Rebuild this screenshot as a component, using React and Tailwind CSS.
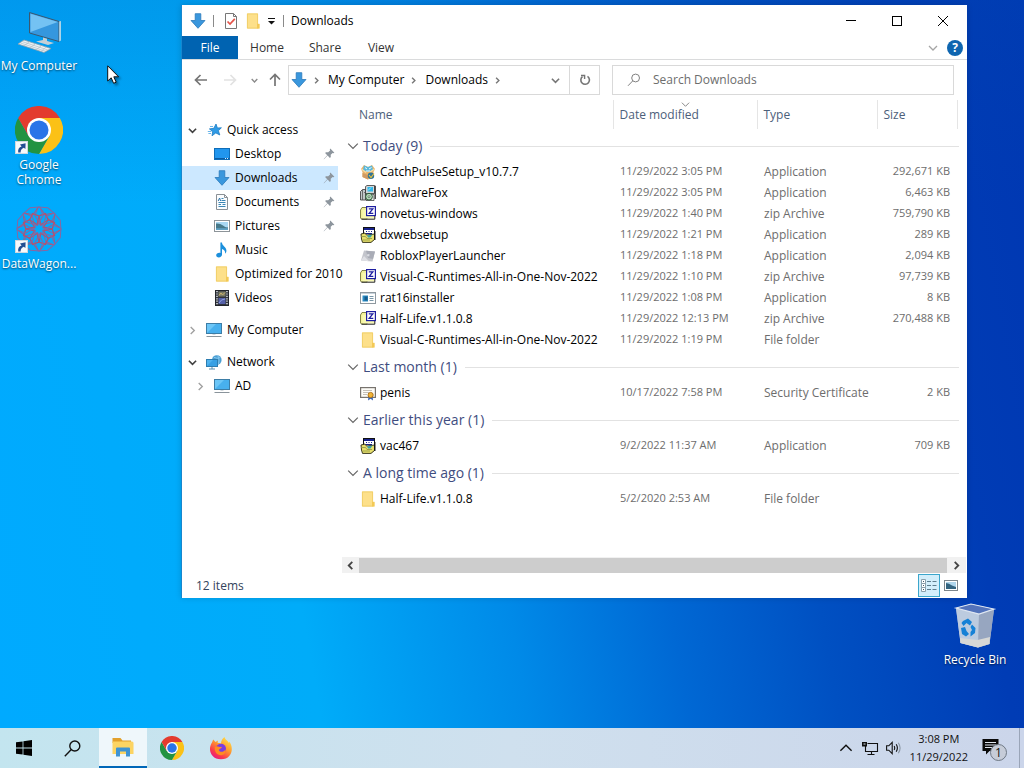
import React from "react";

const FONT = "font-['Open_Sans','Noto_Sans',sans-serif]";

/* ---------- small glyphs ---------- */

function Chevron({ dir = "down", className = "text-[#444]", size = 9, width = 1.5 }) {
  const paths = {
    down: "M1 3 L5 7 L9 3",
    up: "M1 7 L5 3 L9 7",
    right: "M3 1 L7 5 L3 9",
    left: "M7 1 L3 5 L7 9",
  };
  return (
    <svg width={size} height={size} viewBox="0 0 10 10" className={`shrink-0 ${className}`} fill="none" stroke="currentColor" strokeWidth={width}>
      <path d={paths[dir]} />
    </svg>
  );
}

function Arrow({ dir, className }) {
  const paths = {
    left: "M13 7 H1.5 M6.5 2 L1.5 7 L6.5 12",
    right: "M1 7 H12.5 M7.5 2 L12.5 7 L7.5 12",
    up: "M7 13 V1.5 M2 6.5 L7 1.5 L12 6.5",
  };
  return (
    <svg width="14" height="14" viewBox="0 0 14 14" className={className} fill="none" stroke="currentColor" strokeWidth="1.7">
      <path d={paths[dir]} />
    </svg>
  );
}

function Pin() {
  return (
    <svg width="12" height="12" viewBox="0 0 12 12" className="shrink-0" fill="#8d959d">
      <path d="M7.3 0.6 L11.4 4.7 L10.4 5.2 L9.6 4.9 L7.7 6.8 L7.8 9 L6.9 9.9 L4.6 7.6 L1 11.2 L0.7 11.3 L0.8 11 L4.2 7.2 L2.1 5.1 L3 4.2 L5.2 4.3 L7.1 2.4 L6.8 1.6 Z" />
    </svg>
  );
}

function Svg16({ children }) {
  return (
    <svg width="16" height="16" viewBox="0 0 16 16" className="shrink-0">
      {children}
    </svg>
  );
}

/* ---------- 16px icons ---------- */

const DownloadIcon = () => (
  <Svg16>
    <path d="M5.2 0.7 H10.8 V7.5 H15 L8 15.3 L1 7.5 H5.2 Z" fill="#3a97dd" stroke="#2a78ba" strokeWidth="0.8" />
  </Svg16>
);

const FolderIcon = () => (
  <Svg16>
    <path d="M2 0.5 H13 V11 H14.5 V15.5 H2 Z" fill="#fbdf86" />
    <path d="M2.4 0.9 H12.6 V15.1 H2.4 Z" fill="#fde08a" stroke="#efca62" strokeWidth="0.8" />
    <path d="M12 15.5 V10.8 H14.5 V15.5 Z" fill="#f3c956" />
  </Svg16>
);

const StarIcon = () => (
  <Svg16>
    <path d="M9 2 L10.4 6 L14.4 5.8 L11.4 8.7 L12.8 13 L8.8 10.9 L5 13.8 L5.7 9.5 L2.4 6.9 L6.8 6.3 Z" fill="#2f9be6" stroke="#1d7cc4" strokeWidth="0.8" />
    <path d="M0.8 9.5 H4.4 M1.4 11.5 H4 M3 4.5 H6" stroke="#5aaee8" strokeWidth="0.9" />
  </Svg16>
);

const DesktopIcon = () => (
  <Svg16>
    <rect x="0.5" y="2.5" width="15" height="11" fill="#2196ee" stroke="#0f6db8" />
    <path d="M1 12.5 H15" stroke="#0b5ca3" />
    <path d="M11 12.5 H12 M13 12.5 H14" stroke="#d7ecfb" />
  </Svg16>
);

const DocumentIcon = () => (
  <Svg16>
    <path d="M2.5 0.5 H10.5 L13.5 3.5 V15.5 H2.5 Z" fill="#fbfdff" stroke="#8b9196" />
    <path d="M10.5 0.5 V3.5 H13.5" fill="none" stroke="#8b9196" />
    <path d="M7.5 4.5 H9.5 M7.5 6.5 H11.5 M4.5 8.5 H11.5 M4.5 10.5 H7 M8.5 10.5 H11.5 M4.5 12.5 H11.5" stroke="#3c87b5" />
    <path d="M4.2 7 L5.6 4 L6.6 7" fill="none" stroke="#2d74a8" />
  </Svg16>
);

const PicturesIcon = () => (
  <Svg16>
    <rect x="0.5" y="2.5" width="15" height="11" fill="#fff" stroke="#8d9499" />
    <rect x="2" y="4" width="12" height="8" fill="#a9d8f3" />
    <path d="M2 5.5 Q6 5 9 7.5 T14 9.3 V12 H2 Z" fill="#47798a" />
    <path d="M2 10.2 H14 V12 H2 Z" fill="#5fa1c3" />
  </Svg16>
);

const MusicIcon = () => (
  <Svg16>
    <path d="M6.4 0.6 H8 C8 4 12.6 5 12.4 9 C12.3 10.4 11.6 11.3 11 11.8 C11.6 9 9.8 7.6 8 7 V12.6 C8 14.3 6.5 15.5 4.8 15.5 C3.2 15.5 2.2 14.6 2.2 13.3 C2.2 11.7 4 10.4 6.4 10.9 Z" fill="#1b8fdc" />
  </Svg16>
);

const VideoIcon = () => (
  <Svg16>
    <rect x="1.5" y="0.5" width="13" height="15" fill="#30343c" stroke="#22252b" />
    <path d="M3 1 V15 M13 1 V15" stroke="#e8ebee" strokeWidth="1.4" strokeDasharray="1.2 1.2" />
    <rect x="4.5" y="1.5" width="7" height="5" fill="#7b7c66" />
    <path d="M5 5.5 L7 3 L8.5 5 L11 2.5" stroke="#cfb56d" fill="none" />
    <rect x="4.5" y="8" width="7" height="6" fill="#5560a8" />
    <path d="M5 13 Q7 9 11 9" stroke="#8fa1e0" fill="none" />
  </Svg16>
);

const MonitorIcon = () => (
  <Svg16>
    <rect x="0.5" y="1.5" width="15" height="10" fill="#6cc6f7" stroke="#3d7da6" />
    <path d="M1 11 L10 2 H15 V11 Z" fill="#48b0ee" />
    <path d="M6.5 12 H9.5 V13 H6.5 Z" fill="#d4dade" />
    <path d="M0.5 14.5 H15.5" stroke="#8a949b" />
  </Svg16>
);

const NetworkIcon = () => (
  <Svg16>
    <circle cx="10.8" cy="6" r="4.8" fill="#4b9fd4" />
    <path d="M8 3.4 Q11 5 14.4 3.6 M11.8 1.4 Q14 6 12.5 10.4" stroke="#86c8ee" fill="none" />
    <rect x="0.5" y="5.5" width="11" height="7" fill="#4fb3ef" stroke="#2d7db0" />
    <path d="M1 12 L7 6 H11 V12 Z" fill="#37a0e4" />
    <path d="M3 15 H9 M6 13 V15" stroke="#5b8eae" />
  </Svg16>
);

const CatchPulseIcon = () => (
  <Svg16>
    <path d="M1 5 L4 1 L8 3 L12 1 L15 5 L13.5 8 V13 L8 15.5 L2.5 13 V8 Z" fill="#e9b469" />
    <path d="M4 1.5 L8 3 L12 1.5 L13 6 L8 8 L3 6 Z" fill="#58b9dd" />
    <path d="M5 3.5 L7 5 M9 5 L11.5 3.5 M6 7 H10" stroke="#eefaff" />
    <path d="M1.5 5 L6 8.5 M14.5 5 L10 8" stroke="#f5dcab" strokeWidth="1.4" />
    <path d="M2.5 9 L8 11 V15.5 L2.5 13 Z" fill="#d09a62" />
    <circle cx="11" cy="11.8" r="3.2" fill="#2f7497" />
    <path d="M9 11 L11 13.5 L14 9.5" fill="none" stroke="#f0c03a" strokeWidth="1.1" />
  </Svg16>
);

const InstallerIcon = () => (
  <Svg16>
    <path d="M5.5 1.5 L7 0.5 H14.5 V8.5 H5.5 Z" fill="#d3d7d9" stroke="#3a3a3a" strokeWidth="0.8" />
    <rect x="7.5" y="2" width="5.5" height="4.5" fill="#2fb8ea" />
    <path d="M8 5.5 L11 2.5" stroke="#c6f0ff" strokeWidth="0.8" />
    <path d="M15.2 0.8 V14" stroke="#222" strokeWidth="1.2" />
    <path d="M0.5 6.5 L2.5 4.5 H5.5 V15 H0.5 Z" fill="#c2c7c9" stroke="#333" strokeWidth="0.8" />
    <path d="M2.5 5 V15 M4 7.5 H5.5" stroke="#555" strokeWidth="0.8" />
    <path d="M6 8.5 L14 9.5 V15.5 H6 Z" fill="#f4f6f4" stroke="#444" strokeWidth="0.8" />
    <circle cx="9" cy="11.7" r="3.4" fill="#b5d9b9" stroke="#2d5637" strokeWidth="1" />
    <circle cx="9" cy="11.7" r="1" fill="#fff" stroke="#24462f" strokeWidth="0.6" />
  </Svg16>
);

const ZipIcon = () => (
  <Svg16>
    <path d="M0.5 4 L2 1.5 H6 L7 3 V13 H1.5 L0.5 12 Z" fill="#f2f29a" stroke="#77773a" strokeWidth="0.9" />
    <path d="M2.5 4 H14.5 V12.5 H2.5 Z" fill="#f9f9b0" />
    <path d="M1.5 13.2 H14.8 V10" fill="none" stroke="#222" />
    <rect x="6.6" y="0.6" width="8.8" height="9" fill="#fff" stroke="#1e1ea0" strokeWidth="1.2" />
    <path d="M8.8 2.9 H12.8 L9.2 7.3 H13.3" fill="none" stroke="#1e1ea0" strokeWidth="1.3" />
  </Svg16>
);

const SetupBoxIcon = () => (
  <Svg16>
    <rect x="3.5" y="0.5" width="11" height="9" fill="#fff" stroke="#111" />
    <rect x="4" y="1" width="10" height="2" fill="#16218c" />
    <path d="M6 4.5 H7 M8.5 4.5 H9.5 M11 4.5 H12 M6 6.5 H12" stroke="#16218c" />
    <path d="M1 7 L5 6 L6.5 8 L11 7.5 L14.5 7 V12.5 L11 15.4 H2.5 L1.5 12 Z" fill="#e7df6d" stroke="#25250f" strokeWidth="0.9" />
    <path d="M1 9.5 H5.5 L7 11.5 H12 M3 13 H10" fill="none" stroke="#8a9440" strokeWidth="0.8" />
    <path d="M7 8.5 L12.5 7.6 L10.5 10.5 H8 Z" fill="#3aa0a8" />
    <path d="M14.8 4 V13" stroke="#111" strokeWidth="1.3" />
  </Svg16>
);

const RobloxIcon = () => (
  <Svg16>
    <path d="M4 2.5 L15 3.5 L12.5 13.5 L1 12.5 Z" fill="#c3c5cc" />
    <path d="M6 2.7 L15 3.5 L13 11 L8 10 Z" fill="#a9acb6" />
    <path d="M7.5 6 L9.6 6.3 L9.2 8.4 L7 8 Z" fill="#dcdee4" />
    <path d="M1 12.5 L4 8 L9 13.2 Z" fill="#dfe0e5" />
  </Svg16>
);

const WindowAppIcon = () => (
  <Svg16>
    <rect x="0.5" y="2.5" width="15" height="11" fill="#fff" stroke="#8e989f" />
    <path d="M1 3.5 H15" stroke="#c6d2da" />
    <rect x="2.5" y="5.5" width="5.5" height="6" fill="#2a8cc4" />
    <rect x="4.5" y="6.5" width="3" height="4" fill="#155a8a" />
    <path d="M9.5 6.5 H13.5 M9.5 8.5 H13.5 M9.5 10.5 H13.5" stroke="#7896a8" />
  </Svg16>
);

const CertificateIcon = () => (
  <Svg16>
    <rect x="0.6" y="2.6" width="14.8" height="9.8" fill="#fdfcf7" stroke="#77736e" strokeWidth="1.2" />
    <path d="M3 5.5 H12 M3 7.5 H9 M3 9.5 H7" stroke="#c3bfb8" />
    <path d="M8.6 11 L8 15.5 L10.6 13.8 L13 15.5 L12.6 11 Z" fill="#3663b4" />
    <circle cx="10.6" cy="10" r="2.6" fill="#f1b434" stroke="#a96a12" strokeWidth="0.9" />
  </Svg16>
);

const CheckDocIcon = () => (
  <Svg16>
    <path d="M2.5 0.5 H10.5 L13.5 3.5 V15.5 H2.5 Z" fill="#fff" stroke="#777" />
    <path d="M10.5 0.5 V3.5 H13.5" fill="none" stroke="#777" />
    <path d="M4.5 8.5 L7 11 L11.8 5.8" fill="none" stroke="#e5544a" strokeWidth="1.7" />
  </Svg16>
);

/* ---------- larger icons ---------- */

function ChromeLogo({ size }) {
  return (
    <svg width={size} height={size} viewBox="0 0 48 48">
      <path d="M24 12 H44.8 A24 24 0 0 1 24 48 L34.4 30 Z" fill="#fbc116" />
      <path d="M13.6 30 L3.2 12 A24 24 0 0 0 24 48 L34.4 30 Z" fill="#229342" />
      <path d="M3.2 12 L13.6 30 L24 12 H44.8 A24 24 0 0 0 3.2 12 Z" fill="#e33b2e" />
      <circle cx="24" cy="24" r="12" fill="#fff" />
      <circle cx="24" cy="24" r="9.5" fill="#2a74e8" />
    </svg>
  );
}

function ShortcutBadge() {
  return (
    <svg width="13" height="13" viewBox="0 0 13 13" className="absolute bottom-0 left-0">
      <rect x="0.5" y="0.5" width="12" height="12" fill="#f7f9fb" stroke="#cfd8de" />
      <path d="M3.2 11.5 C2.8 8.2 4 6.2 6.6 5.4 L5 3.6 L10.6 2.2 L10.4 8 L8.8 6.8 C6.8 7.6 5.6 9 5.6 11.5 Z" fill="#234f92" />
    </svg>
  );
}

function ComputerArt() {
  return (
    <svg width="48" height="48" viewBox="0 0 48 48">
      <path d="M14.5 5.5 L44 14.5 V34.5 L14.5 26 Z" fill="#3597de" stroke="#3b5870" strokeWidth="1" />
      <path d="M15.5 6.8 L42.8 15 L15.5 25 Z" fill="#74c2f3" />
      <path d="M44.3 14.5 L45.8 14 V33.5 L44.3 34.5 Z" fill="#d7e2e8" />
      <path d="M28 30.5 L32 31.7 V34 L39 36 L33 38 L21 34.5 L28 33 Z" fill="#c5cfd5" />
      <path d="M9 33 L36 41.5 L29 45.5 L3 37 Z" fill="#eef2f4" stroke="#8ba0ad" strokeWidth="0.8" />
      <path d="M7.5 34.7 L33 43 M5.5 36 L31 44.4 M14 35 L9 39 M20 37 L15 41 M26 39 L21 43 M31 40 L26 44.5" stroke="#a7b6bf" strokeWidth="0.6" />
    </svg>
  );
}

const SPOKES = [0, 45, 90, 135, 180, 225, 270, 315];

function DataWagonArt() {
  return (
    <svg width="48" height="48" viewBox="0 0 48 48" fill="none">
      {SPOKES.map((a) => (
        <g key={a} transform={`rotate(${a + 22.5} 24 24)`}>
          <path d="M15 13 V4 L24 1 L33 4 V13 L24 20 Z" stroke="#8a66a0" strokeWidth="1" />
          <path d="M17 4 L30 12 M31 4 L18 12" stroke="#a9587f" strokeWidth="0.9" />
          <path d="M19 12 L24 7 L29 12 L24 19 Z" stroke="#b0526f" strokeWidth="1" />
        </g>
      ))}
    </svg>
  );
}

function RecycleArt() {
  return (
    <svg width="48" height="48" viewBox="0 0 48 48">
      <path d="M5 7 L20 3 L43 8 L38.5 43 L27 46.5 L9.5 42 Z" fill="#aebdd3" />
      <path d="M5 7 L28 13 L27 46.5 L9.5 42 Z" fill="#bccbdf" />
      <path d="M28 13 L43 8 L38.5 43 L27 46.5 Z" fill="#97a6c0" />
      <path d="M5 7 L20 3 L43 8 L28 13 Z" fill="#5373bb" stroke="#dfe7f2" strokeWidth="1.2" />
      <path d="M9 37 L26.5 39 L39 36 L38.5 43 L27 46.5 L9.5 42 Z" fill="#d7d8d6" />
      <path d="M12 20 L17 17.5 L21 21 L19 24.5 L15.5 22 L12.5 25 L10.5 22 Z" fill="#1681d6" />
      <path d="M10 27 L14 26 L15.5 30 L18 33 L15 35.5 L11 33 Z" fill="#1681d6" />
      <path d="M21 23.5 L24.5 27 L24 32 L19.5 35.5 V31 L21 29 L19.5 26 Z" fill="#1681d6" />
    </svg>
  );
}

function ExplorerArt() {
  return (
    <svg width="22" height="20" viewBox="0 0 22 20">
      <path d="M0.5 1 H8.5 L10.5 3.5 H19 V6 H0.5 Z" fill="#e2a02c" />
      <path d="M1 4.5 H20 Q21.5 4.5 21.5 6 V17 H0.5 V5 Z" fill="#fcd463" />
      <path d="M4 19.5 V11.5 Q4 10.5 5 10.5 H17 Q18 10.5 18 11.5 V19.5 H14 V14.5 H8 V19.5 Z" fill="#3f93d2" />
    </svg>
  );
}

function FirefoxArt() {
  return (
    <svg width="24" height="24" viewBox="0 0 24 24">
      <defs>
        <linearGradient id="fx" x1="0.85" y1="0.05" x2="0.2" y2="1">
          <stop offset="0" stopColor="#ffe04a" />
          <stop offset="0.4" stopColor="#ff9a2e" />
          <stop offset="0.75" stopColor="#fb3a4e" />
          <stop offset="1" stopColor="#e31587" />
        </linearGradient>
      </defs>
      <path d="M3 6.5 L4.2 3.5 L6.5 6 L9 4.5 L8.5 6.8 C10 6.8 11 7 12 7.4 C12 5 13.5 2.2 15.5 1 C16 3.5 18.5 4.5 20 7 L20.3 5.5 C25 11.5 23.5 23.3 12 23.3 C1.5 23.3 -1.5 13 3 6.5 Z" fill="url(#fx)" />
      <circle cx="12" cy="12.8" r="5" fill="#7b3ce0" />
      <path d="M6 11 C8.5 9 10.5 12 13 10.8 C12.5 13 10.5 12.5 9.8 14 C10.8 16.6 14.5 16.5 16.5 13.5 C17.2 18.5 12.5 20.3 9.2 18.6 C6.5 17.2 5.3 13.5 6 11 Z" fill="#ff8b22" />
    </svg>
  );
}

/* ---------- data ---------- */

const QUICK = [
  { label: "Desktop", Icon: DesktopIcon, pinned: true },
  { label: "Downloads", Icon: DownloadIcon, pinned: true, active: true },
  { label: "Documents", Icon: DocumentIcon, pinned: true },
  { label: "Pictures", Icon: PicturesIcon, pinned: true },
  { label: "Music", Icon: MusicIcon },
  { label: "Optimized for 2010", Icon: FolderIcon },
  { label: "Videos", Icon: VideoIcon },
];

const GROUPS = [
  {
    title: "Today (9)",
    files: [
      { name: "CatchPulseSetup_v10.7.7", date: "11/29/2022 3:05 PM", type: "Application", size: "292,671 KB", Icon: CatchPulseIcon },
      { name: "MalwareFox", date: "11/29/2022 3:05 PM", type: "Application", size: "6,463 KB", Icon: InstallerIcon },
      { name: "novetus-windows", date: "11/29/2022 1:40 PM", type: "zip Archive", size: "759,790 KB", Icon: ZipIcon },
      { name: "dxwebsetup", date: "11/29/2022 1:21 PM", type: "Application", size: "289 KB", Icon: SetupBoxIcon },
      { name: "RobloxPlayerLauncher", date: "11/29/2022 1:18 PM", type: "Application", size: "2,094 KB", Icon: RobloxIcon },
      { name: "Visual-C-Runtimes-All-in-One-Nov-2022", date: "11/29/2022 1:10 PM", type: "zip Archive", size: "97,739 KB", Icon: ZipIcon },
      { name: "rat16installer", date: "11/29/2022 1:08 PM", type: "Application", size: "8 KB", Icon: WindowAppIcon },
      { name: "Half-Life.v1.1.0.8", date: "11/29/2022 12:13 PM", type: "zip Archive", size: "270,488 KB", Icon: ZipIcon },
      { name: "Visual-C-Runtimes-All-in-One-Nov-2022", date: "11/29/2022 1:19 PM", type: "File folder", size: "", Icon: FolderIcon },
    ],
  },
  {
    title: "Last month (1)",
    files: [{ name: "penis", date: "10/17/2022 7:58 PM", type: "Security Certificate", size: "2 KB", Icon: CertificateIcon }],
  },
  {
    title: "Earlier this year (1)",
    files: [{ name: "vac467", date: "9/2/2022 11:37 AM", type: "Application", size: "709 KB", Icon: SetupBoxIcon }],
  },
  {
    title: "A long time ago (1)",
    files: [{ name: "Half-Life.v1.1.0.8", date: "5/2/2020 2:53 AM", type: "File folder", size: "", Icon: FolderIcon }],
  },
];

/* ---------- desktop ---------- */

function DesktopItem({ label, shortcut, children }) {
  return (
    <button type="button" className="flex w-[78px] flex-col items-center gap-[3px] text-[12px] leading-[15px] text-white [text-shadow:0_1px_2px_rgba(0,0,0,0.6)]">
      <span className="relative block size-12">
        {children}
        {shortcut && <ShortcutBadge />}
      </span>
      <span className="whitespace-pre-line">{label}</span>
    </button>
  );
}

/* ---------- explorer window ---------- */

function TitleBar() {
  return (
    <header className="flex h-[31px] items-center pl-2">
      <DownloadIcon />
      <span className="ml-[7px] h-3 w-px bg-[#8a8a8a]" />
      <button type="button" aria-label="Properties" className="ml-[9px]"><CheckDocIcon /></button>
      <button type="button" aria-label="New folder" className="ml-[6px]"><FolderIcon /></button>
      <button type="button" aria-label="Customize Quick Access Toolbar" className="ml-[6px]">
        <svg width="9" height="8" viewBox="0 0 9 8"><path d="M1 1.5 H8" stroke="#111" /><path d="M1 4 H8 L4.5 7.5 Z" fill="#111" /></svg>
      </button>
      <span className="ml-[7px] h-3 w-px bg-[#8a8a8a]" />
      <h1 className="ml-[7px] flex-1 text-[12px] text-black">Downloads</h1>
      <div className="mr-px flex">
        <button type="button" aria-label="Minimize" className="flex h-[30px] w-[46px] items-center justify-center">
          <svg width="10" height="10" viewBox="0 0 10 10" stroke="#000"><path d="M0 4.5 H10" /></svg>
        </button>
        <button type="button" aria-label="Maximize" className="flex h-[30px] w-[46px] items-center justify-center">
          <svg width="10" height="10" viewBox="0 0 10 10" fill="none" stroke="#000"><rect x="0.5" y="0.5" width="9" height="9" /></svg>
        </button>
        <button type="button" aria-label="Close" className="flex h-[30px] w-[46px] items-center justify-center">
          <svg width="10" height="10" viewBox="0 0 10 10" stroke="#000"><path d="M0 0 L10 10 M10 0 L0 10" /></svg>
        </button>
      </div>
    </header>
  );
}

function Ribbon() {
  return (
    <div className="flex h-6 border-b border-[#dadbdc] text-[12px] text-[#333]">
      <button type="button" className="w-14 bg-[#0063b1] text-white">File</button>
      <button type="button" className="w-[58px]">Home</button>
      <button type="button" className="w-[58px]">Share</button>
      <button type="button" className="w-[54px]">View</button>
      <div className="ml-auto flex items-center gap-[9px] pr-1">
        <button type="button" aria-label="Expand the Ribbon"><Chevron className="text-[#a5a5a5]" size={10} width={1.3} /></button>
        <button type="button" aria-label="Help" className="flex size-4 items-center justify-center rounded-full bg-[#0f66b0] text-[12px] font-bold text-white">?</button>
      </div>
    </div>
  );
}

function AddressBar() {
  return (
    <div className="flex h-10 items-center pr-[13px] text-[12px] text-black">
      <button type="button" aria-label="Back" className="ml-3"><Arrow dir="left" className="text-[#757575]" /></button>
      <button type="button" aria-label="Forward" className="ml-[15px]"><Arrow dir="right" className="text-[#e2e2e2]" /></button>
      <button type="button" aria-label="Recent locations" className="ml-[14px]"><Chevron size={7} width={2} className="text-[#8a8a8a]" /></button>
      <button type="button" aria-label="Up" className="ml-[10px]"><Arrow dir="up" className="text-[#757575]" /></button>
      <nav aria-label="Address" className="ml-[6px] flex h-[30px] w-[312px] items-center border border-[#d9d9d9] pl-[2px]">
        <DownloadIcon />
        <Chevron dir="right" size={7} width={2} className="ml-[6px] text-[#777]" />
        <a href="#my-computer" className="ml-2">My Computer</a>
        <Chevron dir="right" size={7} width={2} className="ml-[6px] text-[#777]" />
        <a href="#downloads" className="ml-2">Downloads</a>
        <Chevron dir="right" size={7} width={2} className="ml-[6px] text-[#777]" />
        <button type="button" aria-label="Previous locations" className="ml-auto mr-[9px]"><Chevron className="text-[#777]" width={1.8} /></button>
        <button type="button" aria-label="Refresh" className="flex h-full w-[30px] items-center justify-center border-l border-[#d9d9d9]">
          <svg width="12" height="12" viewBox="0 0 12 12" fill="none" stroke="#757575" strokeWidth="1.6">
            <path d="M8.5 2.4 A4.3 4.3 0 1 1 3.5 2.6" />
            <path d="M2 1.5 H5.6 V5" strokeWidth="1.4" />
          </svg>
        </button>
      </nav>
      <label className="ml-3 flex h-[30px] min-w-0 flex-1 items-center gap-3 border border-[#d9d9d9] pl-[14px]">
        <svg width="14" height="14" viewBox="0 0 14 14" fill="none" stroke="#808080" strokeWidth="1" className="shrink-0">
          <circle cx="8.6" cy="5" r="3.9" />
          <path d="M5.8 7.8 L1 12.8" />
        </svg>
        <input type="search" aria-label="Search Downloads" placeholder="Search Downloads" className="min-w-0 flex-1 bg-transparent outline-none placeholder:text-[#6d6d6d]" />
      </label>
    </div>
  );
}

function NavPane() {
  return (
    <nav aria-label="Folders" className="w-[156px] shrink-0 pt-[18px] text-[12px] text-black">
      <a href="#quick" className="flex h-6 items-center pl-[6px]">
        <Chevron className="text-[#404040]" width={1.8} />
        <span className="ml-[10px] flex items-center gap-1"><StarIcon />Quick access</span>
      </a>
      {QUICK.map(({ label, Icon, pinned, active }) => (
        <a key={label} href={"#" + label} className={`flex h-6 items-center gap-[5px] pl-8 pr-[3px] ${active ? "bg-[#cce8ff]" : ""}`}>
          <Icon />
          <span className="flex-1 whitespace-nowrap">{label}</span>
          {pinned && <Pin />}
        </a>
      ))}
      <a href="#computer" className="mt-2 flex h-6 items-center pl-[6px]">
        <Chevron dir="right" className="text-[#a0a0a0]" />
        <span className="ml-[9px] flex items-center gap-[5px]"><MonitorIcon />My Computer</span>
      </a>
      <a href="#network" className="mt-2 flex h-6 items-center pl-[6px]">
        <Chevron className="text-[#404040]" width={1.8} />
        <span className="ml-[9px] flex items-center gap-[5px]"><NetworkIcon />Network</span>
      </a>
      <a href="#ad" className="flex h-6 items-center pl-[14px]">
        <Chevron dir="right" className="text-[#a0a0a0]" />
        <span className="ml-[9px] flex items-center gap-[5px]"><MonitorIcon />AD</span>
      </a>
    </nav>
  );
}

function FileTable() {
  const head = "h-[29px] border-l border-[#e5e5e5] p-0 pl-[6px] text-left font-normal";
  return (
    <table className="mb-12 w-full table-fixed border-collapse text-[12px] text-[#6d6d6d]">
      <colgroup>
        <col />
        <col className="w-36" />
        <col className="w-[120px]" />
        <col className="w-20" />
        <col className="w-[10px]" />
      </colgroup>
      <thead className="text-[#4c607a]">
        <tr>
          <th className="h-[29px] p-0 pl-[21px] text-left font-normal">Name</th>
          <th className={`relative ${head}`}>
            Date modified
            <Chevron size={9} width={1.1} className="absolute left-[67px] top-0 text-[#888]" />
          </th>
          <th className={head}>Type</th>
          <th className={head}>Size</th>
          <td className="border-l border-[#e5e5e5]" />
        </tr>
      </thead>
      {GROUPS.map((g) => (
        <tbody key={g.title}>
          <tr>
            <th colSpan={5} className="h-8 p-0 pl-[9px] pr-2 pt-[2px] text-left font-normal">
              <button type="button" className="flex w-full items-center whitespace-nowrap text-[14px] leading-5 text-[#3f4d80]">
                <Chevron size={12} width={1} className="text-[#666]" />
                <span className="ml-1">{g.title}</span>
                <span className="ml-2 h-px flex-1 bg-[#e2e2e2]" />
              </button>
            </th>
          </tr>
          {g.files.map((f) => (
            <tr key={f.name + f.type}>
              <td className="h-[21px] p-0 pl-[22px]">
                <span className="flex items-center gap-1 whitespace-nowrap text-black"><f.Icon />{f.name}</span>
              </td>
              <td className="whitespace-nowrap p-0 pl-[7px] text-[11px]">{f.date}</td>
              <td className="whitespace-nowrap p-0 pl-[7px]">{f.type}</td>
              <td className="whitespace-nowrap p-0 pr-[7px] text-right text-[11px]">{f.size}</td>
              <td />
            </tr>
          ))}
        </tbody>
      ))}
    </table>
  );
}

function ExplorerWindow() {
  return (
    <section aria-label="Downloads" className="absolute left-[181px] right-[57px] top-[5px] border-l border-[#1787cf] bg-white shadow-[0_0_6px_rgba(0,0,0,0.15)]">
      <TitleBar />
      <Ribbon />
      <AddressBar />
      <div className="flex">
        <NavPane />
        <div className="min-w-0 flex-1">
          <FileTable />
          <div className="ml-1 mr-px flex h-4 items-center bg-[#f1f1f1]">
            <button type="button" aria-label="Scroll left" className="flex w-[17px] justify-center"><Chevron dir="left" width={2} className="text-[#444]" /></button>
            <span className="h-[15px] flex-1 bg-[#cdcdcd]" />
            <button type="button" aria-label="Scroll right" className="flex w-[19px] justify-center"><Chevron dir="right" width={2} className="text-[#444]" /></button>
          </div>
        </div>
      </div>
      <footer className="flex h-[25px] items-center pl-[14px] pr-[9px] text-[12px] text-[#32435c]">
        <span className="flex-1">12 items</span>
        <button type="button" aria-label="Details view" className="flex h-[23px] w-[22px] items-center justify-center border border-[#3ba6cc] bg-[#d2eefb]">
          <svg width="16" height="14" viewBox="0 0 16 14" fill="none">
            <path d="M0.5 0.5 H4.5 V4.5 H0.5 Z M0.5 4.5 H4.5 V8.5 H0.5 Z M0.5 8.5 H4.5 V12.5 H0.5 Z" fill="#fff" stroke="#8aa0ac" />
            <path d="M2 2.5 H3 M2 6.5 H3 M2 10.5 H3" stroke="#3d5a6b" />
            <path d="M6 2.5 H10 M11.5 2.5 H15.5 M6 6.5 H10 M11.5 6.5 H15.5 M6 10.5 H10 M11.5 10.5 H15.5" stroke="#5d7d8e" />
          </svg>
        </button>
        <button type="button" aria-label="Large icons view" className="ml-1">
          <svg width="14" height="12" viewBox="0 0 14 12">
            <rect x="0.5" y="0.5" width="13" height="10" fill="#fff" stroke="#7d868c" />
            <rect x="2" y="2" width="10" height="7" fill="#b0d6ec" />
            <path d="M2 3 Q5 3 8 5.5 L12 7 V9 H2 Z" fill="#34647f" />
          </svg>
        </button>
      </footer>
    </section>
  );
}

/* ---------- taskbar ---------- */

function Taskbar() {
  return (
    <footer className="flex h-10 shrink-0 items-stretch bg-linear-to-r from-[#c3e5ef] via-[#cfe0ee] to-[#cbd5ea] text-[#111]">
      <button type="button" aria-label="Start" className="flex w-12 items-center justify-center">
        <svg width="16" height="16" viewBox="0 0 16 16" fill="#000">
          <path d="M0 2.3 L6.6 1.4 V7.6 H0 Z M7.4 1.2 L16 0 V7.6 H7.4 Z M0 8.4 H6.6 V14.6 L0 13.7 Z M7.4 8.4 H16 V16 L7.4 14.8 Z" />
        </svg>
      </button>
      <button type="button" aria-label="Search" className="flex w-12 items-center justify-center">
        <svg width="17" height="17" viewBox="0 0 17 17" fill="none" stroke="#111" strokeWidth="1.4">
          <circle cx="10.8" cy="6" r="5" />
          <path d="M7.3 9.6 L0.8 16.2" />
        </svg>
      </button>
      <button type="button" aria-label="File Explorer" className="ml-[3px] flex w-12 items-center justify-center border-b-2 border-[#0067b8] bg-[#eff7fb]"><ExplorerArt /></button>
      <button type="button" aria-label="Google Chrome" className="ml-px flex w-12 items-center justify-center"><ChromeLogo size={24} /></button>
      <button type="button" aria-label="Firefox" className="flex w-[49px] items-center justify-center"><FirefoxArt /></button>
      <div className="ml-auto flex items-center">
        <button type="button" aria-label="Show hidden icons"><Chevron dir="up" size={14} width={1} className="text-[#111]" /></button>
        <button type="button" aria-label="Network" className="ml-[9px]">
          <svg width="17" height="15" viewBox="0 0 17 15" fill="none" stroke="#111">
            <path d="M5.5 2.5 H15.5 V10.5 H3.5 V5 M9.5 10.5 V13.5 M5.5 13.5 H12.5" strokeWidth="1.1" />
            <rect x="0.5" y="1.5" width="4" height="3.5" fill="#111" />
            <path d="M1.5 3 H3.5" stroke="#d7e2ee" />
          </svg>
        </button>
        <button type="button" aria-label="Volume" className="ml-[7px]">
          <svg width="16" height="14" viewBox="0 0 16 14" fill="none" stroke="#111" strokeWidth="1.1">
            <path d="M0.6 4.8 H2.8 L6.2 1.4 V12.6 L2.8 9.2 H0.6 Z" />
            <path d="M8.2 5 Q9.4 7 8.2 9 M10.2 3.3 Q12.6 7 10.2 10.7" />
            <path d="M12.3 1.8 Q15.9 7 12.3 12.2" stroke="#8b97a5" />
          </svg>
        </button>
        <div className="ml-2 flex flex-col items-center text-[11px] leading-[18px]">
          <time>3:08 PM</time>
          <time>11/29/2022</time>
        </div>
        <button type="button" aria-label="Notifications" className="relative ml-[14px] mr-3">
          <svg width="25" height="26" viewBox="0 0 25 26">
            <path d="M0.5 4 H16.5 V16 H7.5 L4 19.5 V16 H0.5 Z" fill="#0a0a0a" />
            <path d="M3 7.5 H14 M3 10 H14 M3 12.5 H10" stroke="#dfe6ef" strokeWidth="1.1" />
          </svg>
          <span className="absolute bottom-0 right-0 flex size-[17px] items-center justify-center rounded-full border border-[#6f7985] bg-[#c6ccd8] text-[12px] leading-none">1</span>
        </button>
        <span className="h-full w-[5px] border-l border-[#9aa5b8]" />
      </div>
    </footer>
  );
}

export default function App() {
  return (
    <div className={`flex min-h-screen flex-col ${FONT}`}>
      <main className="relative min-h-[610px] flex-1 overflow-hidden bg-[linear-gradient(180deg,rgba(0,80,180,0.2)_0%,rgba(0,80,180,0)_28%),linear-gradient(80deg,#00aaff_0%,#00acf9_28%,#008ae8_46%,#0068d4_60%,#0050c2_73%,#003cb5_88%,#0037b2_100%)]">
        <div className="absolute left-0 top-[7px] flex flex-col">
          <div className="h-[99px]"><DesktopItem label="My Computer"><ComputerArt /></DesktopItem></div>
          <div className="h-[99px]"><DesktopItem label={"Google\nChrome"} shortcut><ChromeLogo size={48} /></DesktopItem></div>
          <DesktopItem label="DataWagon..." shortcut><DataWagonArt /></DesktopItem>
        </div>
        <div className="absolute bottom-[61px] right-[10px]">
          <DesktopItem label="Recycle Bin"><RecycleArt /></DesktopItem>
        </div>
        <ExplorerWindow />
        <svg width="14" height="21" viewBox="0 0 14 21" className="absolute left-[107px] top-[65px] drop-shadow-[2px_2px_1px_rgba(0,0,0,0.35)]">
          <path d="M0.7 0.8 V16 L4.2 12.8 L6.6 18.3 L9.2 17.2 L6.8 11.8 H11.6 Z" fill="#fff" stroke="#111" />
        </svg>
      </main>
      <Taskbar />
    </div>
  );
}
